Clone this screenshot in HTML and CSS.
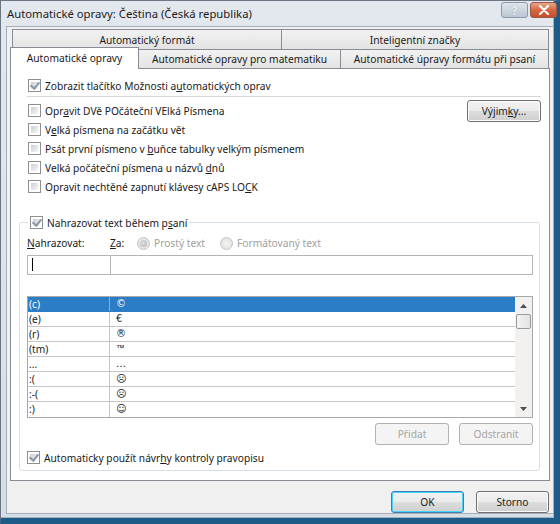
FILE: index.html
```html
<!DOCTYPE html>
<html lang="cs">
<head>
<meta charset="utf-8">
<title>Automatické opravy</title>
<link rel="stylesheet" href="styles.css">
</head>
<body>
<div class="window">
  <div class="titlebar">
    <span class="title">Automatické opravy: Čeština (Česká republika)</span>
    <div class="tbtns">
      <span class="tb help">?</span>
      <span class="tb close"><svg width="12" height="10" viewBox="0 0 12 10"><path d="M2 1 L10 9 M10 1 L2 9" stroke="#fff" stroke-width="2.2" stroke-linecap="round"/></svg></span>
    </div>
  </div>
  <div class="client">
    <div class="tabs">
      <div class="tabrow back">
        <div class="tab w-a">Automatický formát</div>
        <div class="tab w-b">Inteligentní značky</div>
      </div>
      <div class="tabrow front">
        <div class="tab sel w-c">Automatické opravy</div>
        <div class="tab w-d">Automatické opravy pro matematiku</div>
        <div class="tab w-e">Automatické úpravy formátu při psaní</div>
      </div>
    </div>
    <div class="panel">
      <label class="chk first"><span class="box checked"></span><span>Zobrazit tlačítko Možnosti a<u>u</u>tomatických oprav</span></label>
      <div class="sep"></div>
      <div class="opts">
        <div class="optlist">
          <label class="chk"><span class="box"></span><span>Opr<u>a</u>vit DVě POčáteční VElká Písmena</span></label>
          <label class="chk"><span class="box"></span><span>V<u>e</u>lká písmena na začátku vět</span></label>
          <label class="chk"><span class="box"></span><span>Psát první písmeno v <u>b</u>uňce tabulky velkým písmenem</span></label>
          <label class="chk"><span class="box"></span><span>Velká počáteční písmena u názvů <u>d</u>nů</span></label>
          <label class="chk"><span class="box"></span><span>Opravit nechtěné zapnutí klávesy cAPS LO<u>C</u>K</span></label>
        </div>
        <button class="btn exc">Výjim<u>k</u>y...</button>
      </div>
      <div class="group">
        <label class="chk legend"><span class="box checked"></span><span>Nahrazovat text během p<u>s</u>aní</span></label>
        <div class="labels">
          <span class="lab1"><u>N</u>ahrazovat:</span>
          <span class="lab2"><u>Z</u>a:</span>
          <span class="radio on"></span><span class="dis">Prostý text</span>
          <span class="radio"></span><span class="dis">Formátovaný text</span>
        </div>
        <div class="inputs">
          <div class="in1"><span class="caret"></span></div>
          <div class="in2"></div>
        </div>
        <div class="list">
          <div class="rows">
            <div class="row sel"><span class="c1">(c)</span><span class="c2">©</span></div>
            <div class="row"><span class="c1">(e)</span><span class="c2">€</span></div>
            <div class="row"><span class="c1">(r)</span><span class="c2">®</span></div>
            <div class="row"><span class="c1">(tm)</span><span class="c2 tm">™</span></div>
            <div class="row"><span class="c1">...</span><span class="c2">…</span></div>
            <div class="row"><span class="c1">:(</span><span class="c2">☹</span></div>
            <div class="row"><span class="c1">:-(</span><span class="c2">☹</span></div>
            <div class="row"><span class="c1">:)</span><span class="c2">☺</span></div>
          </div>
          <div class="scroll">
            <span class="arr"><svg width="7" height="4" viewBox="0 0 7 4"><path d="M0 4 L3.5 0 L7 4Z" fill="#4d4d4d"/></svg></span>
            <span class="thumb"></span>
            <span class="track"></span>
            <span class="arr"><svg width="7" height="4" viewBox="0 0 7 4"><path d="M0 0 L3.5 4 L7 0Z" fill="#4d4d4d"/></svg></span>
          </div>
        </div>
        <div class="listbtns">
          <button class="btn disabled">Přidat</button>
          <button class="btn disabled">Odstranit</button>
        </div>
        <label class="chk last"><span class="box checked"></span><span>Automaticky použít návr<u>h</u>y kontroly pravopisu</span></label>
      </div>
    </div>
    <div class="footer">
      <button class="btn ok">OK</button>
      <button class="btn">Storno</button>
    </div>
  </div>
</div>
</body>
</html>
```

FILE: styles.css
```css
* { box-sizing: border-box; }
html, body { margin: 0; padding: 0; }
body {
  width: 560px; height: 524px; overflow: hidden;
  font-family: "Noto Sans", "Open Sans", sans-serif;
  font-size: 10.2px; color: #1a1a1a;
  background: #1d5a83;
}
u { text-decoration: underline; text-underline-offset: 1px; }
.window {
  width: 560px; height: 524px;
  display: flex; flex-direction: column;
  background: linear-gradient(#e3e8ee, #d7dee6);
  border-left: 1px solid #6b7682;
  border-top: 1px solid #6b7682;
  border-right: 6px solid #1e5b86;
  border-bottom: 6px solid #1e5b86;
  box-shadow: inset -1px -1px 0 #9fb3c6;
}
.titlebar {
  height: 25px; flex: none;
  display: flex; align-items: center; justify-content: space-between;
  padding: 0 0 0 6px;
}
.title { font-size: 11.3px; color: #1b1b1b; }
.tbtns { display: flex; gap: 2px; margin-top: -7px; margin-right: -3px; }
.tb {
  width: 27px; height: 16px; display: flex; align-items: center; justify-content: center;
  border: 1px solid #8a98a8; border-radius: 3px;
}
.help { background: linear-gradient(#dfe5ec, #bcc7d4); color: #f4f6f9; font-weight: bold; font-size: 12px; text-shadow: 0 0 1px #7a8796; }
.close { background: linear-gradient(#e9a58b, #d6653f 50%, #c84f2c); border-color: #9a5a48; }
.client {
  flex: 1; margin: 0 0 4px 5px;
  background: #f0f0f0;
  border: 1px solid #a6b0bb;
  padding: 2px 4px 0 3px;
  display: flex; flex-direction: column;
}
.tabs { display: flex; flex-direction: column; }
.tabrow { display: flex; }
.tab {
  display: flex; align-items: center; justify-content: center;
  border: 1px solid #898c95; border-bottom: none;
  background: linear-gradient(#f2f2f2, #e3e3e3);
  margin-right: -1px;
  white-space: nowrap;
}
.back { height: 20px; margin-left: 2px; }
.back .tab { height: 20px; padding-top: 1px; }
.front { height: 19px; align-items: flex-end; }
.front .tab { height: 19px; }
.tab.sel {
  height: 22px; margin-top: -2px; background: #fff;
  position: relative; z-index: 2; margin-bottom: -1px;
  padding-bottom: 1px;
}
.w-a { width: 270px; }
.w-b { width: 268px; }
.w-c { width: 129px; }
.w-d { width: 203px; }
.w-e { width: 209px; }
.panel {
  width: 540px; height: 413px;
  background: #fff; border: 1px solid #898c95;
  padding: 7px 8px 0 17px;
  display: flex; flex-direction: column;
  position: relative; z-index: 1;
}
.chk { display: flex; align-items: center; gap: 4px; height: 19px; white-space: nowrap; }
.box {
  width: 13px; height: 13px; flex: none;
  border: 1px solid #8e8f8f; background: #fff;
  padding: 2px; position: relative;
}
.box::before {
  content: ""; display: block; width: 100%; height: 100%;
  background: linear-gradient(135deg, #cbcfd5, #f6f6f6);
}
.box.checked::after {
  content: ""; position: absolute; left: 3px; top: 0px;
  width: 4px; height: 7px;
  border-right: 2px solid #8b98a6; border-bottom: 2px solid #8b98a6;
  transform: rotate(40deg);
}
.sep { height: 1px; background: #d6d6d6; margin: 1px 0 0 -1px; width: 514px; }
.opts { display: flex; justify-content: space-between; margin-top: 4px; }
.optlist { display: flex; flex-direction: column; }
.btn {
  font: inherit; color: #1a1a1a;
  height: 22px; width: 74px;
  border: 1px solid #707070; border-radius: 3px;
  background: linear-gradient(#f2f2f2 0, #ebebeb 50%, #dddddd 50%, #cfcfcf 100%);
  box-shadow: inset 0 0 0 1px #fcfcfc;
  padding: 0; display: flex; align-items: center; justify-content: center;
}
.exc { margin-top: -1px; height: 22px; }
.group {
  margin: 26px 0 0 -9px; width: 521px; height: 249px;
  border: 1px solid #d5dfe5; border-radius: 3px;
  padding: 0 6px 0 7px;
  display: flex; flex-direction: column;
}
.legend { margin: -9px 0 0 1px; background: #fff; align-self: flex-start; padding: 0 2px; height: 17px; }
.labels { display: flex; align-items: center; height: 16px; margin-top: 4px; }
.lab1 { width: 83px; }
.lab2 { width: 27px; }
.dis { color: #a0a0a0; }
.radio {
  width: 13px; height: 13px; border-radius: 50%; border: 1px solid #c3c6c9;
  background: radial-gradient(circle, #f5f5f5 0, #e3e3e3 70%);
  margin-right: 4px; position: relative; flex: none;
}
.radio.on::after {
  content: ""; position: absolute; left: 2px; top: 2px; width: 7px; height: 7px; border-radius: 50%;
  background: radial-gradient(circle at 40% 40%, #e0e0e0, #b2b2b2);
}
.dis + .radio { margin-left: 15px; }
.inputs { display: flex; height: 20px; margin-top: 4px; }
.in1, .in2 { border: 1px solid #b5b5b5; height: 20px; background: #fff; }
.in1 { width: 84px; padding: 2px 3px; }
.in2 { flex: 1; margin-left: -1px; }
.caret { display: block; width: 1px; height: 13px; background: #000; margin-left: 1px; }
.list {
  margin-top: 21px; height: 122px; border: 1px solid #a8a8a8;
  display: flex; background: #fff;
}
.rows { flex: 1; display: flex; flex-direction: column; }
.row { display: flex; height: 15px; border-bottom: 1px solid #c6c6c6; line-height: 14px; }
.row:last-child { border-bottom: none; }
.c1 { width: 82px; border-right: 1px solid #c6c6c6; padding-left: 1px; }
.c2 { flex: 1; padding-left: 6px; font-size: 10px; font-family: "DejaVu Sans", sans-serif; }
.tm { font-size: 8.5px; font-family: "Liberation Sans", sans-serif; line-height: 12px; }
.row.sel { background: #2b7dc5; color: #fff; border-bottom-color: #2b7dc5; }
.row.sel .c1 { border-right-color: #7fb0dc; }
.scroll { width: 17px; background: #f2f1ef; display: flex; flex-direction: column; align-items: center; }
.arr { height: 17px; width: 17px; display: flex; align-items: center; justify-content: center; }
.thumb { width: 15px; height: 15px; border: 1px solid #9a9a9a; border-radius: 2px; background: linear-gradient(90deg, #f3f3f3, #e2e2e2); }
.track { flex: 1; }
.listbtns { display: flex; justify-content: flex-end; gap: 10px; margin-top: 5px; }
.btn.disabled { color: #a5a5a5; border-color: #adb2b5; background: #f4f4f4; box-shadow: none; }
.last { margin-top: 3px; }
.footer { display: flex; justify-content: flex-end; gap: 12px; padding-top: 10px; padding-right: 0; }
.footer .btn { width: 73px; height: 22px; }
.btn.ok { border-color: #3c7fb1; box-shadow: inset 0 0 0 1px #48d2f9; }
```
